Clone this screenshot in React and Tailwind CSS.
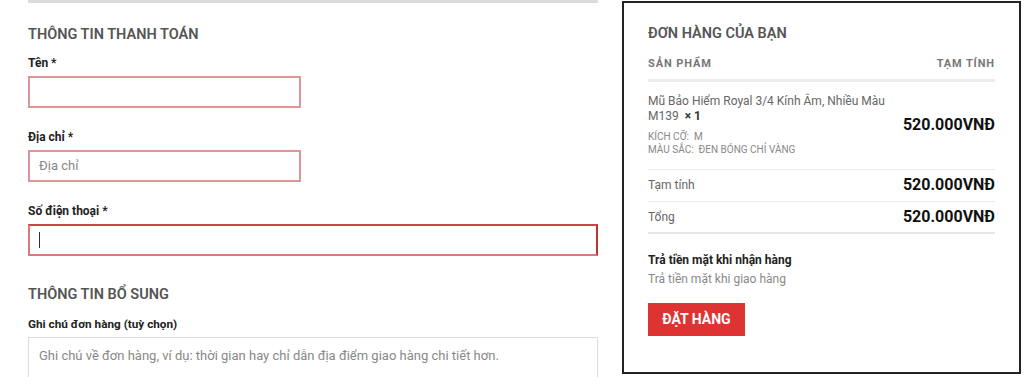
import React from 'react';

const font = { fontFamily: 'Roboto, "Noto Sans", sans-serif' };

function Field({ label, placeholder, wide, focused }) {
  return (
    <div className="mt-[21px] first:mt-0">
      <label className="block text-[12px] font-bold leading-[16px] text-[#222]">{label}</label>
      <div
        className={`mt-[5px] flex h-[32px] items-center border-2 bg-white px-[9px] ${wide ? 'w-[570px]' : 'w-[273px]'} ${focused ? 'border-[#d67a7a] border-r-[#b33] border-t-[#c44]' : 'border-[#df9595]'}`}
      >
        {placeholder && <span className="text-[13px] text-[#888]">{placeholder}</span>}
        {focused && <span className="h-[16px] w-px bg-[#333]" />}
      </div>
    </div>
  );
}

function Row({ label, value, thick }) {
  return (
    <div className={`flex h-[32px] items-center justify-between ${thick ? 'border-b-2 border-[#e6e6e6]' : 'border-b border-[#ececec]'}`}>
      <span className="text-[12px] text-[#666]">{label}</span>
      <span className="text-[16px] font-bold text-[#111]">{value}</span>
    </div>
  );
}

export default function App() {
  return (
    <div className="flex h-[377px] w-[1024px] overflow-hidden bg-white" style={font}>
      {/* billing form */}
      <div className="w-[598px] pl-[28px]">
        <div className="h-[3px] w-[570px] bg-[#dcdcdc]" />
        <h3 className="mt-[23px] text-[14.5px] font-semibold leading-[18px] text-[#555]">THÔNG TIN THANH TOÁN</h3>
        <div className="mt-[11px]">
          <Field label="Tên *" />
          <Field label="Địa chỉ *" placeholder="Địa chỉ" />
          <Field label="Số điện thoại *" wide focused />
        </div>
        <h3 className="mt-[30px] text-[14.5px] font-semibold leading-[18px] text-[#555]">THÔNG TIN BỔ SUNG</h3>
        <label className="mt-[12px] block text-[11.75px] font-bold leading-[16px] text-[#222]">Ghi chú đơn hàng (tuỳ chọn)</label>
        <div className="mt-[5px] h-[60px] w-[570px] border border-[#ddd] px-[10px] pt-[8px] text-[13px] text-[#888]">
          Ghi chú về đơn hàng, ví dụ: thời gian hay chỉ dẫn địa điểm giao hàng chi tiết hơn.
        </div>
      </div>

      {/* order summary */}
      <div className="ml-[24px] mt-[1px] h-[373px] w-[399px] border-2 border-[#222] px-[24px] pt-[22px]">
        <h3 className="text-[14.5px] font-semibold leading-[18px] text-[#555]">ĐƠN HÀNG CỦA BẠN</h3>
        <div className="mt-[13px] flex justify-between border-b-[3px] border-[#ececec] pb-[6px] text-[11px] font-bold tracking-[0.08em] text-[#777]">
          <span>SẢN PHẨM</span>
          <span>TẠM TÍNH</span>
        </div>
        <div className="flex h-[88px] items-center justify-between border-b border-[#ececec]">
          <div className="w-[240px]">
            <div className="text-[12px] leading-[15px] text-[#666]">
              Mũ Bảo Hiểm Royal 3/4 Kính Âm, Nhiều Màu M139&nbsp; <strong className="text-[#333]">× 1</strong>
            </div>
            <div className="mt-[6px] text-[10px] uppercase leading-[13px] text-[#888]">
              <div>Kích cỡ:&nbsp; M</div>
              <div>Màu sắc:&nbsp; Đen bóng chỉ vàng</div>
            </div>
          </div>
          <span className="text-[16px] font-bold text-[#111]">520.000VNĐ</span>
        </div>
        <Row label="Tạm tính" value="520.000VNĐ" />
        <Row label="Tổng" value="520.000VNĐ" thick />
        <div className="mt-[18px] text-[12px] font-bold leading-[16px] text-[#222]">Trả tiền mặt khi nhận hàng</div>
        <div className="mt-[3px] text-[12px] leading-[16px] text-[#888]">Trả tiền mặt khi giao hàng</div>
        <button className="mt-[16px] flex h-[33px] w-[97px] items-center justify-center bg-[#dd3333] text-[14px] font-bold text-white">
          ĐẶT HÀNG
        </button>
      </div>
    </div>
  );
}
